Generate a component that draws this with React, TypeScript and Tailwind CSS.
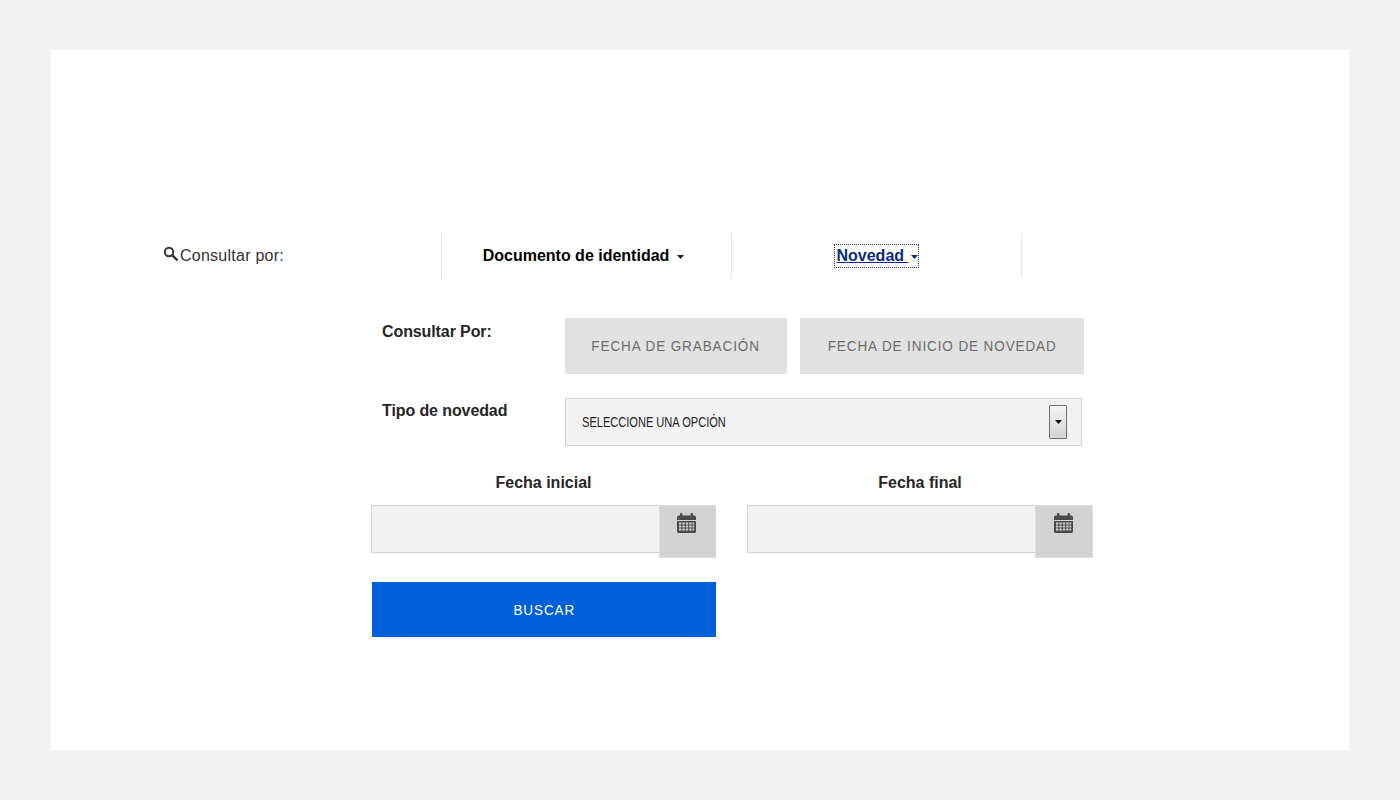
import React from 'react';

const CalendarIcon = () => (
  <svg width="19" height="20" viewBox="0 0 19 20" className="text-[#4a4a4a]">
    <path fill="currentColor" d="M0 4.5C0 3.4.8 2.6 1.8 2.6H3V1.2C3 .5 3.5 0 4.2 0s1.2.5 1.2 1.2v1.4h8.2V1.2c0-.7.5-1.2 1.2-1.2S16 .5 16 1.2v1.4h1.2c1 0 1.8.8 1.8 1.9V7H0z" />
    <path fill="currentColor" d="M0 8h19v10.2c0 1-.8 1.8-1.8 1.8H1.8C.8 20 0 19.2 0 18.2z" />
    <g fill="#d2d2d2">
      <rect x="2" y="9.5" width="2.4" height="2" /><rect x="5.4" y="9.5" width="2.4" height="2" /><rect x="8.8" y="9.5" width="2.4" height="2" /><rect x="12.2" y="9.5" width="2.4" height="2" /><rect x="15.4" y="9.5" width="1.8" height="2" />
      <rect x="2" y="12.5" width="2.4" height="2" /><rect x="5.4" y="12.5" width="2.4" height="2" /><rect x="8.8" y="12.5" width="2.4" height="2" /><rect x="12.2" y="12.5" width="2.4" height="2" /><rect x="15.4" y="12.5" width="1.8" height="2" />
      <rect x="2" y="15.5" width="2.4" height="2" /><rect x="5.4" y="15.5" width="2.4" height="2" /><rect x="8.8" y="15.5" width="2.4" height="2" /><rect x="12.2" y="15.5" width="2.4" height="2" /><rect x="15.4" y="15.5" width="1.8" height="2" />
    </g>
  </svg>
);

const Caret = ({ className }: { className: string }) => (
  <svg width="7" height="4" viewBox="0 0 7 4" className={className}>
    <path fill="currentColor" d="M0 0h7L3.5 4z" />
  </svg>
);

const DateField = ({ label, wrap, box }: { label: string; wrap: string; box: string }) => (
  <div className={`flex flex-col ${wrap}`}>
    <p className="mt-[1px] mb-[12px] text-center text-[16px] leading-[20px] font-bold text-[#262626]">{label}</p>
    <div className="flex items-start">
      <div className="h-[48px] w-[289px] border border-[#d2d2d2] bg-[#f2f2f2]" />
      <div className={`-ml-[1px] flex h-[53px] justify-center border border-[#dcdcdc] bg-[#d2d2d2] pt-[7px] pr-[2px] ${box}`}>
        <CalendarIcon />
      </div>
    </div>
  </div>
);

const App = () => {
  return (
    <div className="min-h-[800px] bg-[#f2f2f2] px-[51px] py-[50px] font-['Liberation_Sans',Arial,sans-serif]">
      <div className="h-[700px] bg-white pt-[183px]">
        {/* Tabs */}
        <div className="ml-[100px] flex h-[45px]">
          <div className="flex w-[291px] items-center border-r border-[#e6e6e6] pl-[12px]">
            <svg width="16" height="16" viewBox="0 0 16 16" className="-mt-[3px] text-[#333]">
              <circle cx="6" cy="6" r="4.2" fill="none" stroke="currentColor" strokeWidth="2" />
              <path d="M9.2 9.2 14.5 14.5" stroke="currentColor" strokeWidth="2.4" />
            </svg>
            <span className="ml-[1px] text-[16px] tracking-[0.25px] text-[#333]">Consultar por:</span>
          </div>
          <div className="flex w-[290px] items-center justify-center border-r border-[#e6e6e6] pr-[6px]">
            <span className="text-[16px] font-bold text-black">Documento de identidad</span>
            <Caret className="mt-[2px] ml-[8px] text-[#222]" />
          </div>
          <div className="flex w-[290px] items-center justify-center border-r border-[#e6e6e6]">
            <div className="flex h-[24px] items-center border border-dotted border-[#333] pl-[1px]">
              <span className="text-[16px] font-bold text-[#0d2a80] underline">Novedad&nbsp;</span>
              <Caret className="mt-[2px] ml-[2px] text-[#0d2a80]" />
            </div>
          </div>
        </div>

        {/* Consultar por */}
        <div className="mt-[40px] ml-[331px] flex">
          <p className="w-[183px] pt-[4px] text-[16px] leading-[20px] font-bold tracking-[-0.1px] text-[#262626]">Consultar Por:</p>
          <button className="h-[56px] w-[222px] bg-[#e2e2e2] text-[15px] tracking-[1px] text-[#6b6b6b]">
            <span className="inline-block scale-x-[0.9]">FECHA DE GRABACIÓN</span>
          </button>
          <button className="ml-[13px] h-[56px] w-[284px] bg-[#e2e2e2] text-[15px] tracking-[1px] text-[#6b6b6b]">
            <span className="inline-block scale-x-[0.9]">FECHA DE INICIO DE NOVEDAD</span>
          </button>
        </div>

        {/* Tipo de novedad */}
        <div className="mt-[24px] ml-[331px] flex">
          <p className="w-[183px] pt-[3px] text-[16px] leading-[20px] font-bold tracking-[-0.1px] text-[#262626]">Tipo de novedad</p>
          <div className="flex h-[48px] w-[517px] items-center justify-between border border-[#d2d2d2] bg-[#f2f2f2] pr-[14px] pl-[16px]">
            <span className="origin-left scale-x-[0.79] text-[14px] whitespace-nowrap text-[#222]">SELECCIONE UNA OPCIÓN</span>
            <div className="flex h-[34px] w-[18px] items-center justify-center rounded-[1px] border border-[#707070] bg-gradient-to-b from-[#f4f4f4] to-[#d4d4d4]">
              <Caret className="text-[#111]" />
            </div>
          </div>
        </div>

        {/* Fechas */}
        <div className="mt-[26px] ml-[320px] flex">
          <DateField label="Fecha inicial" wrap="w-[345px]" box="w-[57px]" />
          <DateField label="Fecha final" wrap="ml-[31px] w-[346px]" box="w-[58px]" />
        </div>

        <button className="mt-[24px] ml-[321px] block h-[55px] w-[344px] bg-[#0060d8] pt-[2px] text-[15px] tracking-[1px] text-white">
          <span className="inline-block scale-x-[0.9]">BUSCAR</span>
        </button>
      </div>
    </div>
  );
};

export default App;
